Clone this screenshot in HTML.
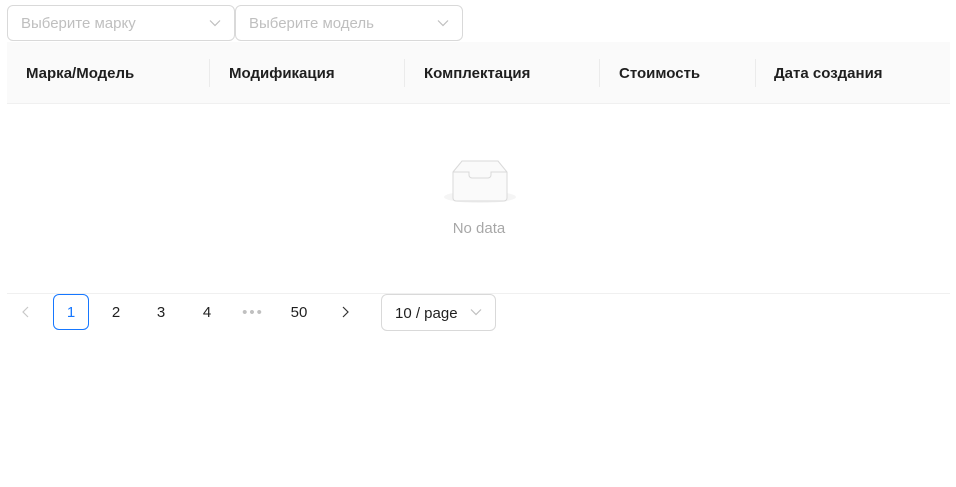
<!DOCTYPE html><html><head><meta charset="utf-8"><style>
*{box-sizing:border-box;margin:0;padding:0}
body{width:956px;height:487px;background:#fff;font-family:"Liberation Sans",sans-serif;font-size:14px;color:rgba(0,0,0,.88);position:relative;overflow:hidden}
.a{position:absolute}
.sel{border:1px solid #d9d9d9;border-radius:6px;height:36px;top:5px;color:#bfbfbf;padding:9px 13px;font-size:15px}
.arr{position:absolute;right:12px;top:10px}
.th{top:42px;left:7px;width:943px;height:62px;background:#fafafa;border-bottom:1px solid #f0f0f0}
.h{top:65px;font-weight:bold;font-size:15px}
.sep{top:59px;width:1px;height:28px;background:#ebebeb}
.pg{top:295px;height:36px;line-height:36px;text-align:center;font-size:15px}
</style></head><body>
<div class="a sel" style="left:7px;width:228px">Выберите марку<svg class="arr" width="14" height="14" viewBox="0 0 14 14"><path d="M2 4.5l5 5 5-5" fill="none" stroke="#bfbfbf" stroke-width="1.2"/></svg></div>
<div class="a sel" style="left:235px;width:228px">Выберите модель<svg class="arr" width="14" height="14" viewBox="0 0 14 14"><path d="M2 4.5l5 5 5-5" fill="none" stroke="#bfbfbf" stroke-width="1.2"/></svg></div>
<div class="a th"></div>
<div class="a h" style="left:26px">Марка/Модель</div>
<div class="a sep" style="left:209px"></div>
<div class="a h" style="left:229px">Модификация</div>
<div class="a sep" style="left:404px"></div>
<div class="a h" style="left:424px">Комплектация</div>
<div class="a sep" style="left:599px"></div>
<div class="a h" style="left:619px">Стоимость</div>
<div class="a sep" style="left:755px"></div>
<div class="a h" style="left:774px">Дата создания</div>
<svg class="a" style="left:443px;top:158px" width="74" height="48" viewBox="0 0 74 48">
<ellipse cx="37" cy="39" rx="36" ry="6" fill="#f5f5f5"/>
<path d="M10 14L19 3h36l9 11v26a3 3 0 0 1-3 3H13a3 3 0 0 1-3-3z" fill="#fafafa" stroke="#d9d9d9"/>
<path d="M10 14h16v3a3 3 0 0 0 3 3h16a3 3 0 0 0 3-3v-3h16" fill="none" stroke="#d9d9d9"/>
</svg>
<div class="a" style="left:0;width:958px;text-align:center;top:220px;color:rgba(0,0,0,.35);font-size:15px">No data</div>
<div class="a" style="left:7px;width:943px;top:293px;height:1px;background:#f0f0f0"></div>
<svg class="a" style="left:19px;top:305px" width="14" height="14" viewBox="0 0 14 14"><path d="M9 2L4 7l5 5" fill="none" stroke="#c8c8c8" stroke-width="1.2"/></svg>
<div class="a pg" style="left:53px;top:294px;width:36px;border:1px solid #1677ff;border-radius:6px;color:#1677ff;line-height:36px">1</div>
<div class="a pg" style="left:98px;width:36px">2</div>
<div class="a pg" style="left:143px;width:36px">3</div>
<div class="a pg" style="left:189px;width:36px">4</div>
<div class="a pg" style="left:235px;width:36px;color:#c0c0c0;letter-spacing:2px">•••</div>
<div class="a pg" style="left:281px;width:36px">50</div>
<svg class="a" style="left:338px;top:305px" width="14" height="14" viewBox="0 0 14 14"><path d="M5 2l5 5-5 5" fill="none" stroke="#333" stroke-width="1.2"/></svg>
<div class="a" style="left:381px;top:294px;width:115px;height:37px;border:1px solid #d9d9d9;border-radius:6px;padding:10px 13px;font-size:15px">10 / page<svg class="arr" width="14" height="14" viewBox="0 0 14 14"><path d="M2 4.5l5 5 5-5" fill="none" stroke="#bfbfbf" stroke-width="1.2"/></svg></div>
</body></html>
